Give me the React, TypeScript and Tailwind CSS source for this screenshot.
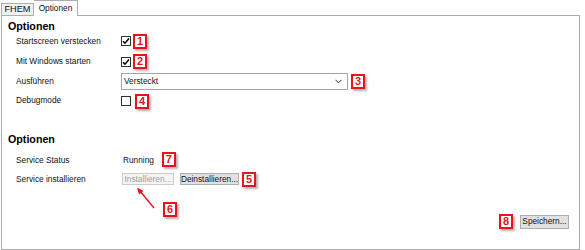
import type { ReactNode } from 'react';

/** Red numbered callout used to annotate the screenshot. */
function Badge({ n }: { n: number }) {
  return (
    <span className="flex h-[15px] w-[14px] shrink-0 items-center justify-center border-2 border-[#e8141c] bg-white text-[11px] font-bold leading-none text-[#e8141c] shadow-[2px_2px_2px_rgba(0,0,0,0.3)]">
      {n}
    </span>
  );
}

function Checkbox({ checked }: { checked?: boolean }) {
  return (
    <span className="flex h-[10px] w-[10px] shrink-0 items-center justify-center border border-[#333] bg-white">
      {checked && (
        <svg width="8" height="8" viewBox="0 0 8 8" fill="none">
          <path d="M1 4.2 L3 6.2 L7 1.6" stroke="#000" strokeWidth="1.6" />
        </svg>
      )}
    </span>
  );
}

function Row({ label, h, children }: { label: string; h: string; children: ReactNode }) {
  return (
    <div className={`flex items-center ${h}`}>
      <span className="ml-[8px] w-[105px] shrink-0">{label}</span>
      <div className="flex items-center">{children}</div>
    </div>
  );
}

export default function App() {
  return (
    <div className="h-[250px] w-[585px] overflow-hidden bg-white font-['Liberation_Sans',Arial,sans-serif] text-[8.3px] leading-none text-[#111]">
      {/* tab strip */}
      <div className="relative z-10 flex h-[15px] items-end pl-[1px]">
        <div className="flex h-[12px] w-[33px] items-center justify-center border border-b-0 border-[#acacac] bg-[#f0f0f0] text-[9.2px]">
          FHEM
        </div>
        <div className="-mb-px flex h-[16px] w-[44px] items-center justify-center border border-b-0 border-l-0 border-[#acacac] bg-white pb-[1px]">
          Optionen
        </div>
      </div>

      {/* tab page */}
      <div className="relative ml-[1px] h-[235px] w-[579px] border border-[#acacac] pl-[6px] pr-[10px]">
        <div className="flex h-[15px] items-center pt-[5px] text-[10.7px] font-bold text-black">Optionen</div>

        <Row label="Startscreen verstecken" h="h-[20px]">
          <Checkbox checked />
          <span className="ml-[2px]">
            <Badge n={1} />
          </span>
        </Row>
        <Row label="Mit Windows starten" h="h-[21px]">
          <Checkbox checked />
          <span className="ml-[2px]">
            <Badge n={2} />
          </span>
        </Row>
        <Row label="Ausführen" h="h-[19px]">
          <div className="flex h-[17px] w-[227px] items-center justify-between border border-[#a5a5a5] bg-white pl-[2px] pr-[5px]">
            <span>Versteckt</span>
            <svg width="7" height="5" viewBox="0 0 7 5" fill="none">
              <path d="M0.5 0.8 L3.5 3.8 L6.5 0.8" stroke="#333" strokeWidth="1" />
            </svg>
          </div>
          <span className="ml-[3px]">
            <Badge n={3} />
          </span>
        </Row>
        <Row label="Debugmode" h="h-[19px]">
          <Checkbox />
          <span className="ml-[4px] mt-[2px]">
            <Badge n={4} />
          </span>
        </Row>

        <div className="mt-[23px] flex h-[12px] items-center text-[10.7px] font-bold text-black">Optionen</div>

        <div className="mt-[6px]">
          <Row label="Service Status" h="h-[19px]">
            <span className="pl-[2px]">Running</span>
            <span className="ml-[8px] -mt-[2px]">
              <Badge n={7} />
            </span>
          </Row>
          <Row label="Service installieren" h="h-[18px]">
            <button
              type="button"
              disabled
              className="ml-[1px] flex h-[12px] w-[52px] items-center justify-center border border-[#cccccc] bg-[#f4f4f4] text-[#a0a0a0]"
            >
              Installieren...
            </button>
            <button
              type="button"
              className="ml-[6px] flex h-[12px] w-[59px] items-center justify-center border border-[#adadad] bg-[#e1e1e1]"
            >
              Deinstallieren...
            </button>
            <span className="ml-[3px]">
              <Badge n={5} />
            </span>
          </Row>
        </div>

        <div className="mt-[26px] flex items-center justify-end gap-[7px]">
          <Badge n={8} />
          <button
            type="button"
            className="flex h-[14px] w-[49px] items-center justify-center border border-[#adadad] bg-[#e1e1e1]"
          >
            Speichern...
          </button>
        </div>

        {/* callout 6 with its arrow */}
        <svg className="absolute left-[130px] top-[168px]" width="30" height="30" viewBox="0 0 30 30" fill="none">
          <path d="M22 24 L8 7" stroke="#e8141c" strokeWidth="1.4" />
          <path d="M5 3.5 L11.5 7 L7 10.5 Z" fill="#e8141c" />
        </svg>
        <span className="absolute left-[161px] top-[186px]">
          <Badge n={6} />
        </span>
      </div>
    </div>
  );
}
